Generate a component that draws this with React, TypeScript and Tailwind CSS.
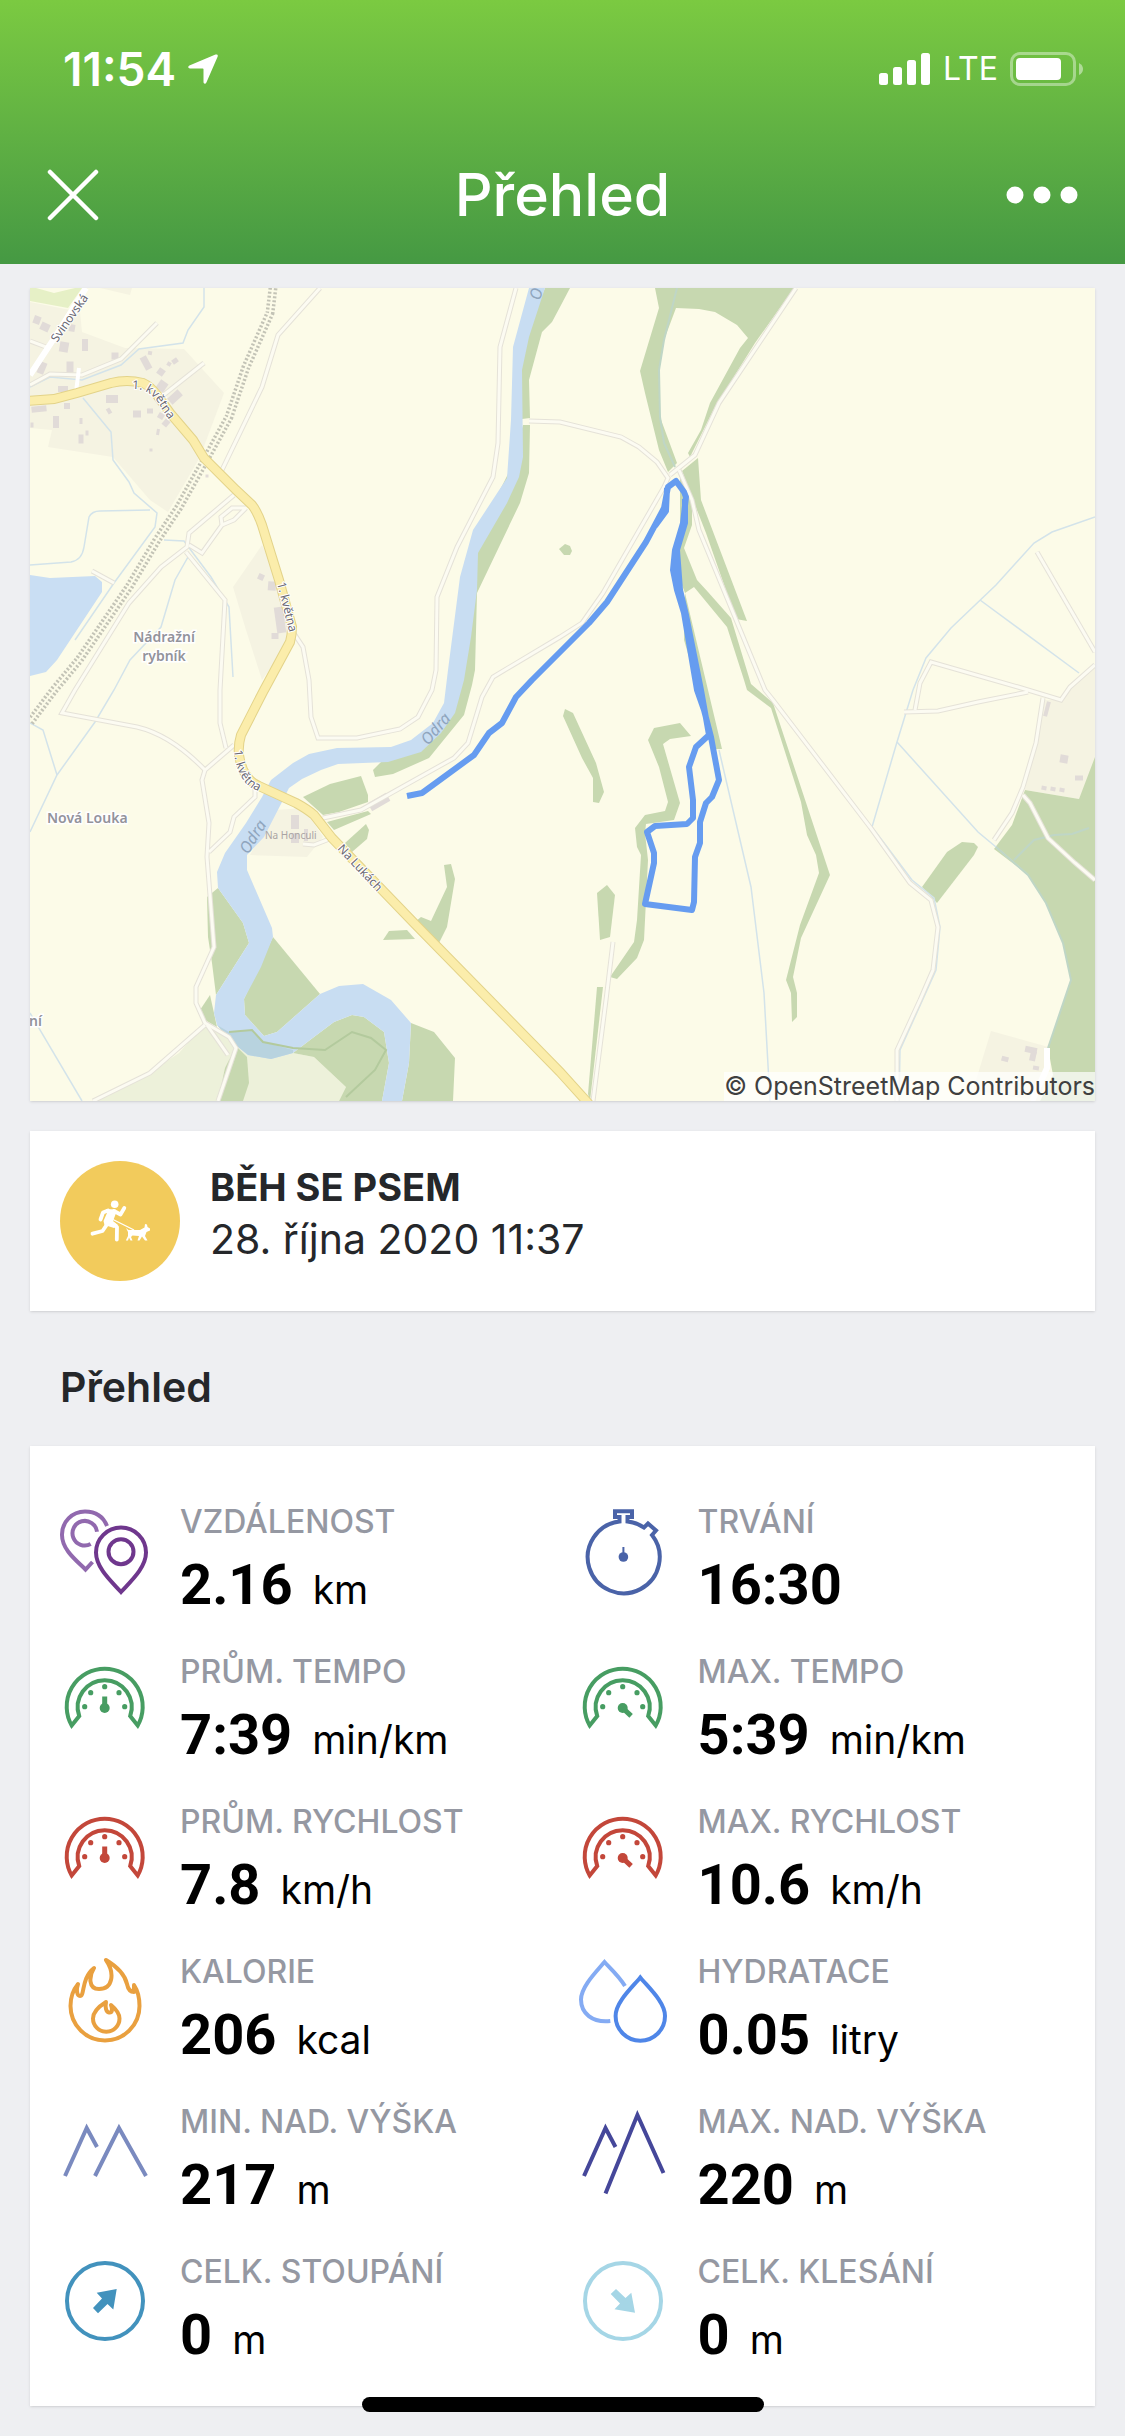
import type { ReactNode } from 'react';

const STREAMS = [
  'M204 288V307L188 330L183 343L139 349L121 365L82 380L50 377L30 387',
  'M83 398L111 432L113 460L129 482L134 493L157 513L155 527L114 583L75 640',
  'M30 565L71 562Q82 560 84 547L89 517Q92 511 100 511L150 510',
  'M164 540L184 541L211 577L229 607L233 677',
  'M188 557L175 580L161 627L130 660L114 690L95 722L57 775L30 832',
  'M30 723L43 730L57 775',
  'M30 1013L82 1101',
  'M1095 517L1052 532L1034 543L996 585L951 628L926 658L913 690L897 742L872 827L912 880L934 898L940 927L936 970L900 1050L899 1101',
  'M897 742L978 832L996 847L1028 875',
  'M980 600L1079 673',
  'M719 750L751 887L764 993L770 1101',
];

const PATHS = [
  'M320 288L278 335L262 387L221 472',
  'M157 323L130 350L121 359L82 375L50 374L30 385',
  'M204 363L161 397',
  'M30 341L46 347',
  'M234 495L189 533L187 547L161 567L129 603L75 690L62 713L137 727Q171 735 205 770',
  'M246 508H232L221 517L222 525L234 520L246 508M222 525L202 553L189 545',
  'M186 552L225 600L220 690V723L226 748',
  'M234 745L205 770L202 780L209 823L207 857L214 947L196 987V1003L205 1023L229 1037L236 1048L218 1101',
  'M205 1025L150 1073L93 1101M207 1025L228 1055',
  'M255 788V797L234 817L230 832L209 852',
  'M114 583L92 571',
  'M516 288L500 347L498 443L493 477L457 547L437 597L436 670L432 690L418 717L400 729L357 738H318L311 717L309 680L303 647L293 632',
  'M529 421L560 422L621 437L639 447L657 462L668 478L664 487L603 593L582 623L560 637L493 677L482 697L468 743L454 758L361 810L323 818',
  'M303 844L314 845L332 838',
  'M796 288L719 403L695 455L670 475',
  'M679 470L692 500L699 530L765 690L773 700L870 827L910 883L931 900L938 927L933 970L920 1000L897 1050V1101',
  'M1037 552L1095 652',
  'M1095 665L1070 687L1061 700L1018 687L931 662L920 683L915 710',
  'M904 712L938 711L978 702L1028 692',
  'M1043 698L1036 743L1023 787L1012 813L994 840',
  'M1023 795L1030 803L1048 838L1075 863L1095 880',
  'M613 942L606 1000L593 1101',
];

const WOODS = [
  'M545 288H570L560 307L552 322L542 332L529 380L530 418L522 419L520 350Z',
  'M523 425H530L529 473L520 503L477 593L475 670L472 685L464 715L429 758L393 774L375 777L373 770L385 758L430 740L455 690L465 560L510 470Z',
  'M303 797L330 784L361 776L368 795V802L339 812L323 815Z',
  'M327 822L368 811L371 814L334 830Z',
  'M345 843L366 824L369 830L367 839L352 852Z',
  'M444 865L451 864L455 879L447 927L439 943L415 922L421 917L431 921L447 887Z',
  'M389 931L407 930L415 939L383 940Z',
  'M207 897L218 888L243 923L249 943L216 995L212 963L208 937Z',
  'M210 995L200 1010L205 1020L217 1027L214 1013Z',
  'M273 937L320 994L277 1032L264 1036L245 1015L244 999Z',
  'M237 1047L247 1057L249 1083L243 1101H218L225 1068L229 1060Z',
  'M293 1053L314 1057L346 1087L339 1101H382L389 1063L384 1032L364 1017L352 1015L334 1022L314 1037Z',
  'M411 1023L434 1032L455 1058L453 1101H402L409 1063Z',
  'M655 288H794L755 343L715 407L690 457L688 453L701 430L710 403L740 348L748 338L737 325L715 312L699 309L676 308L664 340L659 370L660 417L677 463L668 472L659 450L645 393L640 371L659 308Z',
  'M682 471L698 458L701 500L747 621L736 619L706 533L693 500Z',
  'M692 503V525L684 548L697 580L708 592L731 618L751 684L773 703L830 875L801 938L793 977L797 993V1017L792 1022L791 993L786 980L800 925L819 873L816 855L807 835L801 802L771 708L747 690L744 680L727 627L694 587L685 593L678 575L680 540L680 475Z',
  'M685 593L708 690L722 749H716L684 640Z',
  'M565 709L573 713L596 763L604 792L599 803L593 802V778L582 758L563 716Z',
  'M680 723L691 736L670 739L663 744L680 803L674 820L646 824L645 833L648 860L644 940L637 958L617 979L610 977L634 942L637 920L641 855L637 847L635 828L645 815L665 811L668 802L659 767L648 740L654 728Z',
  'M607 885L615 895L610 937L600 940L597 893Z',
  'M597 987H603L590 1101L588 1094Z',
  'M565 544L570 546L572 551L570 555L564 555L559 549Z',
  'M922 887L947 852L962 842L974 843L978 847L974 855L937 903Z',
  'M1095 757L1079 799L1025 790L1012 825L994 849L1028 875L1046 903L1063 943L1071 980L1048 1048L1053 1075L1040 1101H1095Z',
];

const BUILT_UP = [
  'M30 302L80 312L82 332L125 348L184 349L224 393L200 457L168 512L150 500L113 457L48 447L52 430L30 428Z',
  'M100 288H132L130 295Z',
  'M262 545L233 587L246 630L262 680L291 640L279 580Z',
  'M275 810L304 808L323 837L307 857L250 855Z',
  'M1095 665L1061 700L1043 700L1025 790L1079 799L1095 760Z',
  'M991 1031L1052 1048L1040 1101L973 1090Z',
];

// x, y (centre), width, height, rotation
const BUILDINGS = [
  [37, 320, 7, 8, 20], [45, 327, 9, 8, 25], [72, 328, 6, 7, 10], [64, 347, 9, 10, 10], [85, 345, 6, 12, 0],
  [115, 356, 7, 7, 0], [42, 368, 7, 12, 22], [70, 367, 7, 11, 0], [146, 363, 7, 14, -28], [161, 372, 7, 7, 35],
  [169, 364, 4, 4, 30], [175, 361, 6, 5, -35], [150, 353, 4, 4, 10], [162, 386, 9, 10, 35], [175, 397, 8, 14, 48],
  [112, 399, 12, 8, 0], [109, 411, 4, 6, -30], [137, 414, 8, 7, 0], [150, 411, 6, 5, 0], [161, 416, 6, 6, 30],
  [166, 423, 6, 7, 40], [158, 432, 3, 6, 10], [151, 450, 3, 3, 0], [67, 406, 6, 6, 0], [56, 422, 6, 12, 0],
  [81, 421, 3, 6, 0], [87, 433, 3, 5, 0], [81, 439, 5, 9, 0], [63, 389, 10, 6, 0], [39, 409, 15, 6, -6],
  [32, 425, 3, 5, 0], [261, 577, 6, 6, 25], [272, 586, 8, 9, 5], [280, 620, 9, 26, -8], [275, 636, 7, 6, 0],
  [207, 476, 3, 3, 0], [295, 822, 8, 14, 0], [295, 838, 8, 10, 0], [306, 835, 4, 12, 0], [379, 802, 21, 9, -30],
  [1064, 759, 8, 8, 10], [1079, 778, 8, 5, 0], [1044, 788, 5, 4, 10], [1053, 789, 5, 4, 10], [1062, 790, 5, 4, 10],
  [1047, 709, 4, 15, 15], [1031, 1050, 12, 6, 12], [1033, 1056, 6, 10, 12], [1005, 1059, 7, 5, 15], [1036, 1068, 6, 4, 10],
];

const RIVER =
  'M529 288L513 347L511 420L507 478L473 530L460 577L448 670L444 703L433 723L411 740L391 747L337 748L309 754L293 763L271 780L262 797L246 823L225 853L217 872L218 888L243 923L249 943L216 995L214 1013L217 1025L232 1042L248 1055L271 1059L293 1053L314 1037L334 1022L352 1015L364 1017L384 1032L389 1063L382 1101H402L409 1063L411 1023L391 1000L363 984L339 986L320 994L277 1032L264 1036L245 1015L244 999L261 967L273 937L272 928L247 870V855L264 837L282 802L289 788L302 779L321 770L338 764L388 762L421 752L441 733L455 713L464 680L471 637L477 590L478 553L507 503L519 477L523 457L522 370L529 337L545 288Z';

const RAILWAY = 'M273 288L270 313L246 367L229 417L207 457L179 507L157 540L129 587L79 660L54 690L30 722';

const ROAD =
  'M28 401L54 399L77 393L111 383Q127 379 143 383Q150 386 157 395L170 413L193 440L204 458L236 490L252 505Q257 511 262 525L279 580L292 627Q292 635 290 642L264 690L241 735Q238 745 239 755Q241 768 246 775Q251 783 259 786L296 803Q307 809 314 815L332 838L414 923L560 1072L589 1104';

const TRACK =
  'M407 796L422 793L474 755L489 733L502 723L516 697L532 680L560 652L589 623L607 602L646 542L654 527L664 508L668 487L676 481L684 492L686 497L683 523L675 550L673 570L677 590L684 613L697 690L704 710L711 737L719 780L712 797L706 803L700 822V843L695 857L694 902L692 910L645 904L654 863V853L647 832L655 826L687 824L693 818V800L689 767L696 747L709 735L701 690L686 615L680 590L677 550L685 523V499M655 526L666 511L667 488';

function RouteMap() {
  return (
    <svg viewBox="30 288 1065 813" className="block w-full" role="img" aria-label="Mapa trasy" fontFamily="'Noto Sans', sans-serif">
      <defs>
        <path id="kvetna-north" d="M132 389Q152 388 163 411L175 428" />
        <path id="kvetna-south" d="M234 750Q236 776 250 787L264 794" />
      </defs>
      <rect x="30" y="288" width="1065" height="813" fill="#fcfbe8" />
      {BUILT_UP.map((d) => <path key={d} d={d} fill="#f5f3e2" />)}
      <path d="M30 288H36L54 293L75 288H82L68 308L30 301Z" fill="#e6f0c6" />
      <path d="M205 1023L179 1053L143 1077L93 1101H339L346 1087L314 1057L293 1053L248 1055L229 1037Z" fill="#edf1da" />
      {WOODS.map((d) => <path key={d} d={d} fill="#c7d8b0" />)}
      <path d="M30 575L50 578L95 576L102 582V592L57 660L46 672L30 676Z" fill="#c9def3" />
      <g fill="none" stroke="#d3e3ea" strokeWidth="1.5">
        {STREAMS.map((d) => <path key={d} d={d} />)}
      </g>
      <g fill="none" stroke="#bfd6c6" strokeWidth="2">
        <path d="M677 288L664 340L659 370L660 417L664 443L675 467" />
        <path d="M1014 860L1034 840L1054 835L1072 834L1089 828" />
        <path d="M996 847L1028 875L1046 903L1063 943L1071 980L1048 1048" />
      </g>
      <path d={RIVER} fill="#c8ddf2" />
      <path d="M217 1025L229 1032L252 1030L263 1042L293 1050V1053L271 1059L248 1055L232 1042Z" fill="#b8d3df" />
      <path d="M229 1032L252 1030L263 1042L293 1048L325 1050L352 1032L371 1038L386 1050L375 1070L346 1097" fill="none" stroke="#b3ca9d" strokeWidth="2" />
      {BUILDINGS.map(([x, y, w, h, r]) => (
        <rect key={`${x}-${y}`} x={x - w / 2} y={y - h / 2} width={w} height={h} fill="#e1dbd8" transform={`rotate(${r} ${x} ${y})`} />
      ))}
      <g fill="none" stroke="#e5e2d8" strokeWidth="5">
        {PATHS.map((d) => <path key={d} d={d} />)}
      </g>
      <g fill="none" stroke="#fcfbf2" strokeWidth="3">
        {PATHS.map((d) => <path key={d} d={d} />)}
      </g>
      <g fill="none" stroke="#fff" strokeWidth="6">
        <path d="M86 288L55 337L30 375" />
        <path d="M79 368L76 392" strokeWidth="4" />
        <path d="M1047 1048V1068L1032 1101" />
      </g>
      <path d={RAILWAY} fill="none" stroke="#c3c3b6" strokeWidth="9" strokeDasharray="2 2" />
      <path d={RAILWAY} fill="none" stroke="#fcfbe8" strokeWidth="2" />
      <path d={ROAD} fill="none" stroke="#e3d389" strokeWidth="10" />
      <path d={ROAD} fill="none" stroke="#fbedab" strokeWidth="8" />
      <path d={TRACK} fill="none" stroke="#669cf0" strokeWidth="6" strokeLinejoin="round" />

      <g fill="#6c6a74" stroke="#fff" strokeWidth="2" paintOrder="stroke" fontSize="12">
        <text transform="translate(57 343) rotate(-55)">Svinovská</text>
        <text><textPath href="#kvetna-north">1. května</textPath></text>
        <text transform="translate(277 583) rotate(76)">1. května</text>
        <text><textPath href="#kvetna-south">1. května</textPath></text>
        <text transform="translate(337 849) rotate(47)">Na Lukách</text>
      </g>
      <g fill="#93939b" stroke="#fff" strokeWidth="3" paintOrder="stroke" fontSize="14" fontWeight="600">
        <text x="164" y="642" textAnchor="middle">Nádražní</text>
        <text x="164" y="661" textAnchor="middle">rybník</text>
        <text x="47" y="823">Nová Louka</text>
        <text x="29" y="1026">ní</text>
      </g>
      <text x="265" y="839" fill="#aaa4a4" fontSize="10">Na Honculi</text>
      <g fill="#8fa5bd" fontSize="16" fontStyle="italic">
        <text transform="translate(428 746) rotate(-49)">Odra</text>
        <text transform="translate(248 855) rotate(-58)">Odra</text>
        <text transform="translate(540 301) rotate(-75)">O</text>
      </g>
    </svg>
  );
}

function Icon({ color, children }: { color: string; children: ReactNode }) {
  return (
    <svg viewBox="0 0 90 90" className="size-[90px] shrink-0 overflow-visible" fill="none" stroke={color} strokeWidth="4" aria-hidden="true">
      {children}
    </svg>
  );
}

function Gauge({ color, angle }: { color: string; angle: number }) {
  return (
    <Icon color={color}>
      <path d="M11.7 69.5A38 38 0 1 1 77.7 69.5L70.2 60A27 27 0 1 0 19.2 60Z" />
      <g fill={color} stroke="none">
        <circle cx="24.7" cy="50.7" r="2.6" />
        <circle cx="30.7" cy="36.7" r="2.6" />
        <circle cx="44.7" cy="30.7" r="2.6" />
        <circle cx="59" cy="36.7" r="2.6" />
        <circle cx="64.7" cy="50.7" r="2.6" />
        <circle cx="44.7" cy="52" r="5" />
        <rect x="42.2" y="40.5" width="5" height="11" transform={`rotate(${angle} 44.7 52)`} />
      </g>
    </Icon>
  );
}

function CircleArrow({ color, angle }: { color: string; angle: number }) {
  return (
    <Icon color={color}>
      <circle cx="45" cy="45" r="38" />
      <path d="M56.7 33L36.7 36.7L42 42.5L33 52L38 57.3L47.5 48L53.3 53.5Z" fill={color} stroke="none" transform={`rotate(${angle} 45 45)`} />
    </Icon>
  );
}

const Pins = () => (
  <Icon color="#6f378d">
    <g stroke="#9169ae">
      <path d="M47 20C43 10 35 5.5 25 5.5A23 23 0 0 0 2 29C2 44 17 55 25.5 63.5L32.5 56" />
      <path d="M37 25.7A12.3 12.3 0 1 0 30.7 38" />
    </g>
    <path d="M61 86C52 76 36 62 36 46.5A25 25 0 0 1 86 46.5C86 62 70 76 61 86Z" />
    <circle cx="61" cy="45.7" r="12.5" />
  </Icon>
);

const Stopwatch = () => (
  <Icon color="#4a63a8">
    <path d="M74 29A36 36 0 1 1 41.5 15.5V11H37V5.3H54V11H49.5V15.5A36 36 0 0 1 66 21.5L70 17.5L78 24.5Z" />
    <circle cx="45.4" cy="51" r="4.8" fill="#4a63a8" stroke="none" />
    <path d="M45.4 41V51" strokeWidth="2" />
  </Icon>
);

const Flame = () => (
  <Icon color="#e9a03f">
    <path strokeLinejoin="round" d="M46 4C56 10 65 19 67 28C68 33 70 36 74 36V29C78 35 79.5 42 79.5 50A34.5 34.5 0 0 1 10.5 50C10.5 41 13 34 18 28C16 34 17 40 20 40C25 40 21 22 34 12C29 20 28 33 39 33C53 33 55 17 46 4Z" />
    <path strokeLinejoin="round" d="M46 46C38 51 33 56 33 62.5A13.2 13.2 0 0 0 59.5 62.5C59.5 58 57 54 51 49C53 54 52 57 49 56.5C46 56 45 51 46 46Z" />
  </Icon>
);

const Drops = () => (
  <Icon color="#4f86e8">
    <path d="M47 30C41 20 31 11 26.5 6C18 16 3 31 3 43.5C3 57 14 67 32.3 65" stroke="#84abf3" />
    <path d="M62.3 21.5C70 31 87 46 87 60A24.7 24.7 0 0 1 37.6 60C37.6 46 54.6 31 62.3 21.5Z" />
  </Icon>
);

const LowPeaks = () => (
  <Icon color="#7a8abf">
    <path d="M5 70L26.7 22L37 41M35 70L59 22L86 70" />
  </Icon>
);

const HighPeaks = () => (
  <Icon color="#45479a">
    <path d="M6 70L27.5 22L37.5 41M27.5 87.5L59.4 9L85.5 67" />
  </Icon>
);

interface Stat { label: string; value: string; unit?: string; icon: ReactNode; }

const STATS: Stat[] = [
  { label: 'VZDÁLENOST', value: '2.16', unit: 'km', icon: <Pins /> },
  { label: 'TRVÁNÍ', value: '16:30', icon: <Stopwatch /> },
  { label: 'PRŮM. TEMPO', value: '7:39', unit: 'min/km', icon: <Gauge color="#479d62" angle={0} /> },
  { label: 'MAX. TEMPO', value: '5:39', unit: 'min/km', icon: <Gauge color="#479d62" angle={133} /> },
  { label: 'PRŮM. RYCHLOST', value: '7.8', unit: 'km/h', icon: <Gauge color="#c3473a" angle={0} /> },
  { label: 'MAX. RYCHLOST', value: '10.6', unit: 'km/h', icon: <Gauge color="#c3473a" angle={133} /> },
  { label: 'KALORIE', value: '206', unit: 'kcal', icon: <Flame /> },
  { label: 'HYDRATACE', value: '0.05', unit: 'litry', icon: <Drops /> },
  { label: 'MIN. NAD. VÝŠKA', value: '217', unit: 'm', icon: <LowPeaks /> },
  { label: 'MAX. NAD. VÝŠKA', value: '220', unit: 'm', icon: <HighPeaks /> },
  { label: 'CELK. STOUPÁNÍ', value: '0', unit: 'm', icon: <CircleArrow color="#4292bd" angle={0} /> },
  { label: 'CELK. KLESÁNÍ', value: '0', unit: 'm', icon: <CircleArrow color="#a5d6e6" angle={90} /> },
];

function StatItem({ label, value, unit, icon }: Stat) {
  return (
    <div className="flex gap-[30px] pt-[30px] pb-[14px]">
      {icon}
      <dl>
        <dt className="text-[32px] leading-8 font-medium whitespace-nowrap text-[#9598a2]">{label}</dt>
        <dd className="mt-5 flex items-baseline gap-5 whitespace-nowrap text-black">
          <span className="font-[Roboto,sans-serif] text-[56px] leading-[54px] font-bold">{value}</span>
          {unit && <span className="text-[39px] leading-10">{unit}</span>}
        </dd>
      </dl>
    </div>
  );
}

function StatusBar() {
  return (
    <div className="flex h-[138px] items-center justify-between pr-[41px] pl-[63px]">
      <div className="flex items-center gap-3">
        <span className="text-[46px] font-semibold">11:54</span>
        <svg viewBox="0 0 30 30" className="size-[30px]" fill="currentColor" aria-hidden="true">
          <path d="M27.5.6C29 0 30.3 1 29.6 2.7L18.4 28.5C17.6 30.3 15.5 30 15.5 28V15.2Q15.5 14.4 14.7 14.4H2C0 14.4-.4 12.4 1.4 11.6Z" />
        </svg>
      </div>
      <div className="flex items-center gap-3">
        <svg viewBox="0 0 52 32" className="h-8 w-[52px]" fill="currentColor" aria-hidden="true">
          <rect y="20" width="9" height="12" rx="2.5" />
          <rect x="14" y="14" width="9" height="18" rx="2.5" />
          <rect x="28" y="7" width="9" height="25" rx="2.5" />
          <rect x="42" width="9" height="32" rx="2.5" />
        </svg>
        <span className="text-[32px]">LTE</span>
        <svg viewBox="0 0 74 34" className="h-[34px] w-[74px]" aria-hidden="true">
          <rect x="1.5" y="1.5" width="63" height="31" rx="8.5" fill="none" stroke="#fff" strokeOpacity=".4" strokeWidth="3" />
          <rect x="6" y="6" width="45" height="22" rx="4" fill="#fff" />
          <path d="M69 11Q73 13 73 17T69 23Z" fill="#fff" fillOpacity=".45" />
        </svg>
      </div>
    </div>
  );
}

function DogRunBadge() {
  return (
    <svg viewBox="0 0 120 120" className="size-[120px] shrink-0" aria-hidden="true">
      <circle cx="60" cy="60" r="60" fill="#f2cb5c" />
      <circle cx="54.7" cy="43.2" r="3.8" fill="#fff" />
      <g fill="none" stroke="#fff" strokeLinecap="round" strokeLinejoin="round" strokeWidth="3.8">
        <path d="M48 49.5L43 51.5L40.5 58.5" />
        <path d="M54 50L60.5 53.5L64.3 47" />
        <path d="M48 62L42.5 70L32.5 72.7" />
        <path d="M50 61L57 66L56.8 78.5" />
      </g>
      <path d="M46 48L55.5 48.5L56.5 51L53 60L58 64L54 67L44.5 64L43.5 60L47 52Z" fill="#fff" />
      <path d="M53 58.5L74 69" stroke="#fff" strokeWidth="1.3" />
      <path d="M66 67L68.5 69H80L84.5 66.5L85 63L87 63.5L87.5 66L90 67.5V69.5L86.5 71L85 75L87.5 79.5H85L82 75.5L79.5 79.5H77.5L79 75L72.5 74.5L71 76L72.5 79.5H70.5L69 76.5L68 79.5H65.8L68 75V71Z" fill="#fff" />
    </svg>
  );
}

export default function App() {
  return (
    <div className="bg-[#eeeff2] pb-[30px] font-[Inter,sans-serif] text-[#25272a]">
      <header className="bg-linear-to-b from-[#7bca41] to-[#459943] pb-3 text-white">
        <StatusBar />
        <nav className="grid h-[114px] grid-cols-3 items-center px-[47px]">
          <button aria-label="Zavřít" className="justify-self-start">
            <svg viewBox="0 0 52 52" className="size-[52px]" stroke="currentColor" strokeWidth="4.5" strokeLinecap="round">
              <path d="M3 3L49 49M49 3L3 49" />
            </svg>
          </button>
          <h1 className="text-center text-[59px] font-medium">Přehled</h1>
          <button aria-label="Další možnosti" className="justify-self-end">
            <svg viewBox="0 0 72 18" className="h-[18px] w-[72px]" fill="currentColor">
              <circle cx="9" cy="9" r="8.5" />
              <circle cx="36" cy="9" r="8.5" />
              <circle cx="63" cy="9" r="8.5" />
            </svg>
          </button>
        </nav>
      </header>

      <main className="px-[30px] pt-6">
        <section className="relative shadow">
          <RouteMap />
          <p className="absolute right-0 bottom-0 bg-white/70 text-[25px] leading-[29px] whitespace-nowrap text-[#3f4040]">
            © OpenStreetMap Contributors
          </p>
        </section>

        <section className="mt-[30px] flex gap-[30px] bg-white p-[30px] shadow">
          <DogRunBadge />
          <div className="leading-[52px]">
            <h2 className="text-[38px] font-bold">BĚH SE PSEM</h2>
            <p className="text-[41px]">28. října 2020 11:37</p>
          </div>
        </section>

        <h2 className="px-[30px] pt-[50px] pb-[33px] text-[41px] leading-[52px] font-semibold">Přehled</h2>

        <section className="grid grid-cols-2 gap-x-[30px] bg-white p-[30px] shadow">
          {STATS.map((stat) => <StatItem key={stat.label} {...stat} />)}
        </section>
      </main>

      <div className="fixed bottom-6 left-1/2 h-[15px] w-[402px] -translate-x-1/2 rounded-full bg-black" />
    </div>
  );
}
